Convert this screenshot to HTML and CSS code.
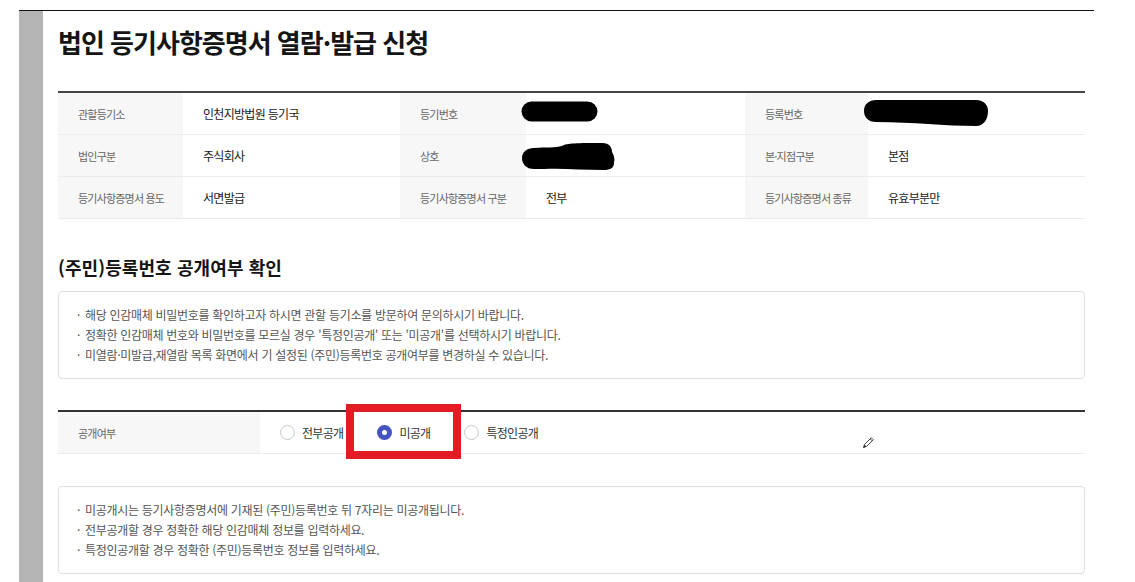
FILE: index.html
```html
<!DOCTYPE html>
<html lang="ko">
<head>
<meta charset="utf-8">
<title>법인 등기사항증명서 열람·발급 신청</title>
<link rel="stylesheet" href="styles.css">
</head>
<body>
<div class="frame">
  <div class="sidebar"></div>
  <main class="content">
    <h1 class="page-title">법인 등기사항증명서 열람·발급 신청</h1>

    <div class="info-table">
      <div class="th">관할등기소</div>
      <div class="td">인천지방법원 등기국</div>
      <div class="th">등기번호</div>
      <div class="td"><svg class="blob blob-1" width="77" height="21" viewBox="0 0 77 21"><rect x="0.5" y="0.5" width="76" height="20" rx="10" fill="#000"/></svg></div>
      <div class="th">등록번호</div>
      <div class="td"><svg class="blob blob-2" width="124" height="26" viewBox="0 0 124 26"><path d="M12 0 H112 C120 0 124 5 124 11 C124 19 120 26 112 26 C80 26 50 22 12 22 C4 22 0 17 0 11 C0 4 5 0 12 0 Z" fill="#000"/></svg></div>

      <div class="th">법인구분</div>
      <div class="td">주식회사</div>
      <div class="th">상호</div>
      <div class="td"><svg class="blob blob-3" width="93" height="27" viewBox="0 0 93 27"><path d="M12 5 C25 4 33 5 40 3 C45 0 55 0 80 0 C88 0 90 5 90 9 C92 12 93 16 92 20 C92 25 88 27 82 27 C60 27 40 25 22 26 L12 26 C4 26 0 21 0 15 C0 9 5 5 12 5 Z" fill="#000"/></svg></div>
      <div class="th">본·지점구분</div>
      <div class="td">본점</div>

      <div class="th">등기사항증명서 용도</div>
      <div class="td">서면발급</div>
      <div class="th">등기사항증명서 구분</div>
      <div class="td">전부</div>
      <div class="th">등기사항증명서 종류</div>
      <div class="td">유효부분만</div>
    </div>

    <h2 class="section-title">(주민)등록번호 공개여부 확인</h2>
    <ul class="notice">
      <li>해당 인감매체 비밀번호를 확인하고자 하시면 관할 등기소를 방문하여 문의하시기 바랍니다.</li>
      <li>정확한 인감매체 번호와 비밀번호를 모르실 경우 '특정인공개' 또는 '미공개'를 선택하시기 바랍니다.</li>
      <li>미열람·미발급,재열람 목록 화면에서 기 설정된 (주민)등록번호 공개여부를 변경하실 수 있습니다.</li>
    </ul>

    <div class="radio-table">
      <div class="th">공개여부</div>
      <div class="radio-cell">
        <label class="radio"><span class="radio-mark"></span>전부공개</label>
        <label class="radio"><span class="radio-mark is-checked"></span>미공개</label>
        <label class="radio"><span class="radio-mark"></span>특정인공개</label>
      </div>
      <div class="highlight"></div>
      <svg class="cursor" width="13" height="13" viewBox="0 0 13 13"><path d="M1.5 11.5 L2.6 8.4 L9.3 1.7 L11.3 3.7 L4.6 10.4 Z" fill="#fff" stroke="#444" stroke-width="1" stroke-linejoin="round"/><path d="M1.2 11.8 L2.4 8.6 L4.4 10.6 Z" fill="#333"/><path d="M8.2 2.8 L10.2 4.8" stroke="#444" stroke-width="1"/></svg>
    </div>

    <ul class="notice notice-second">
      <li>미공개시는 등기사항증명서에 기재된 (주민)등록번호 뒤 7자리는 미공개됩니다.</li>
      <li>전부공개할 경우 정확한 해당 인감매체 정보를 입력하세요.</li>
      <li>특정인공개할 경우 정확한 (주민)등록번호 정보를 입력하세요.</li>
    </ul>
  </main>
</div>
</body>
</html>
```

FILE: styles.css
```css
html, body {
  margin: 0;
  padding: 0;
  overflow: hidden;
  background: #fff;
}

body {
  font-family: "Noto Sans CJK KR", "Noto Sans", sans-serif;
  color: #222;
}

.frame {
  display: flex;
  margin: 10px 0 0 19px;
  width: 1075px;
  border-top: 1px solid #111;
}

.sidebar {
  width: 24px;
  min-height: 571px;
  background: #b4b4b4;
  flex: none;
}

.content {
  padding-left: 15px;
  width: 1027px;
  flex: none;
}

.page-title {
  margin: 0;
  padding-top: 15px;
  font-size: 26px;
  line-height: 32px;
  font-weight: 700;
  letter-spacing: -1px;
  color: #151515;
}

.info-table {
  display: grid;
  grid-template-columns: 125px 217px 126px 219px 123px 217px;
  margin-top: 33px;
  border-top: 2px solid #444;
}

.th,
.td {
  display: flex;
  align-items: center;
  height: 41px;
  padding-left: 20px;
  border-bottom: 1px solid #ececec;
  white-space: nowrap;
}

.th {
  background: #f7f7f7;
  font-size: 11px;
  letter-spacing: -0.8px;
  color: #666;
}

.td {
  font-size: 12px;
  letter-spacing: -0.7px;
  color: #1a1a1a;
}

.blob {
  display: block;
  flex: none;
}

.blob-1 {
  margin-left: -25px;
  margin-top: -5px;
}

.blob-2 {
  margin-left: -24px;
  margin-top: -1px;
}

.blob-3 {
  margin-left: -24px;
  margin-top: 1px;
}

.section-title {
  margin: 36px 0 0;
  font-size: 18px;
  line-height: 24px;
  font-weight: 700;
  letter-spacing: 0.1px;
  color: #151515;
}

.notice {
  list-style: none;
  margin: 12px 0 0;
  padding: 13px 18px;
  border: 1px solid #dedede;
  border-radius: 4px;
  font-size: 12px;
  line-height: 20px;
  letter-spacing: -0.3px;
  color: #555;
}

.notice li::before {
  content: "·";
  display: inline-block;
  width: 8px;
}

.notice-second {
  margin-top: 32px;
}

.radio-table {
  position: relative;
  display: grid;
  grid-template-columns: 202px 1fr;
  margin-top: 31px;
  border-top: 2px solid #333;
}

.radio-cell {
  display: flex;
  align-items: center;
  gap: 34px;
  height: 41px;
  padding-left: 20px;
  border-bottom: 1px solid #ececec;
}

.radio {
  display: flex;
  align-items: center;
  gap: 7px;
  font-size: 12px;
  letter-spacing: -0.7px;
  color: #333;
}

.radio-mark {
  display: block;
  width: 15px;
  height: 15px;
  box-sizing: border-box;
  border: 1px solid #c9c9c9;
  border-radius: 50%;
  background: #fff;
}

.radio-mark.is-checked {
  border: 5px solid #4654c1;
}

.highlight {
  position: absolute;
  left: 288px;
  top: -8px;
  width: 115px;
  height: 55px;
  box-sizing: border-box;
  border: 8px solid #e31c23;
}

.cursor {
  position: absolute;
  left: 804px;
  top: 24px;
}
```
